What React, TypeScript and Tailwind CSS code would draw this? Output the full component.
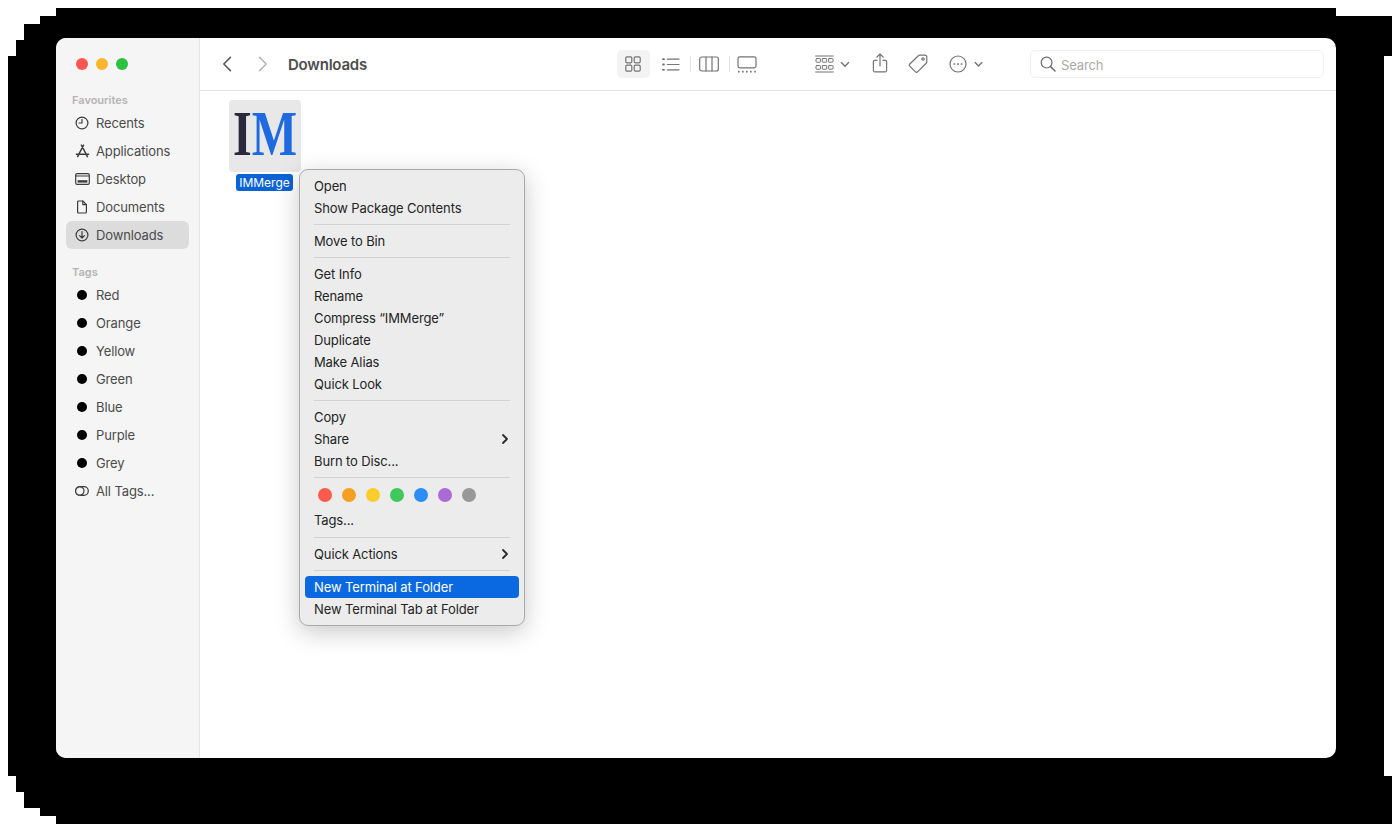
import React from "react";

const font = { fontFamily: "Inter, 'Liberation Sans', sans-serif" };

function Svg({ w, h, children, className = "" }: { w: number; h: number; children: React.ReactNode; className?: string }) {
  return (
    <svg width={w} height={h} viewBox={`0 0 ${w} ${h}`} fill="none" stroke="currentColor" strokeWidth={1.2} strokeLinecap="round" strokeLinejoin="round" className={"block flex-none " + className}>
      {children}
    </svg>
  );
}

const sideIcons: Record<string, React.ReactNode> = {
  Recents: (
    <Svg w={14} h={14}>
      <circle cx={7} cy={7} r={5.9} />
      <path d="M7 3.4V7H4" />
    </Svg>
  ),
  Applications: (
    <Svg w={15} h={14}>
      <path d="M8.6 1.2 3.4 11M6.4 1.2 11.6 11M1.4 10.2h12.2M2.6 12.6l1-1.8M12.4 12.6l-1-1.8" strokeWidth={1.5} />
    </Svg>
  ),
  Desktop: (
    <Svg w={15} h={12}>
      <rect x={0.7} y={0.7} width={13.6} height={10.6} rx={1.4} />
      <path d="M.8 3h13.4" />
      <rect x={2.6} y={7.2} width={9.8} height={2.4} fill="currentColor" stroke="none" />
    </Svg>
  ),
  Documents: (
    <Svg w={12} h={14}>
      <path d="M1.6 2a1 1 0 0 1 1-1h4.2L10.4 4.6V12a1 1 0 0 1-1 1H2.6a1 1 0 0 1-1-1Z" />
      <path d="M6.8 1v3.6h3.6" />
    </Svg>
  ),
  Downloads: (
    <Svg w={14} h={14}>
      <circle cx={7} cy={7} r={5.9} />
      <path d="M7 3.6v6.2M4.6 7.6 7 10l2.4-2.4" />
    </Svg>
  ),
};

function SideRow({ label, active = false, icon }: { label: string; active?: boolean; icon: React.ReactNode }) {
  return (
    <div className={"flex h-[28px] items-center rounded-[6px] mx-[10px] pl-[6px] " + (active ? "bg-[#dcdcdc]" : "")}>
      <span className="flex w-[20px] justify-center text-[#3c3c3c]">{icon}</span>
      <span className="ml-[4px] text-[13px] leading-none tracking-[-0.13px] text-[#4b4b4b]">{label}</span>
    </div>
  );
}

function SideHead({ label, className = "" }: { label: string; className?: string }) {
  return <div className={"flex h-[18px] items-center pl-[16px] text-[11px] font-semibold text-[#b4b4b4] " + className}>{label}</div>;
}

function Dot() {
  return <span className="block h-[10px] w-[10px] rounded-full bg-black" />;
}

function Item({ label, arrow = false, active = false }: { label: string; arrow?: boolean; active?: boolean }) {
  return (
    <div className={"mx-[5px] flex h-[22px] items-center justify-between rounded-[4px] pl-[9px] pr-[10px] text-[13px] leading-none tracking-[-0.12px] " + (active ? "bg-[#0a69e0] text-white" : "text-[#242424]")}>
      <span>{label}</span>
      {arrow && (
        <svg width={8} height={12} viewBox="0 0 8 12" fill="none" stroke="#2a2a2a" strokeWidth={1.8} strokeLinecap="round" strokeLinejoin="round">
          <path d="M2 2l4 4-4 4" />
        </svg>
      )}
    </div>
  );
}

function Sep({ h = "h-[11px]" }: { h?: string }) {
  return (
    <div className={"mx-[14px] flex items-center " + h}>
      <div className="h-px w-full bg-[#d2d2d2]" />
    </div>
  );
}

const tagColors = ["bg-[#fb5a4e]", "bg-[#f5a024]", "bg-[#f9cd2c]", "bg-[#3ec95c]", "bg-[#2b8df5]", "bg-[#ab6ad4]", "bg-[#989898]"];

export default function App() {
  return (
    <div className="h-[832px] w-[1392px] overflow-hidden bg-white" style={font}>
      <div className="h-[824px] w-[1392px] bg-black pl-[56px] pt-[38px] [clip-path:polygon(56px_8px,1336px_8px,1336px_16px,1392px_16px,1392px_56px,1384px_56px,1384px_776px,1392px_776px,1392px_824px,56px_824px,56px_816px,40px_816px,40px_808px,24px_808px,24px_792px,16px_792px,16px_776px,8px_776px,8px_56px,16px_56px,16px_40px,24px_40px,24px_24px,40px_24px,40px_16px,56px_16px)]">
        <div className="flex h-[720px] w-[1280px] overflow-hidden rounded-[10px] bg-white">
          <aside className="w-[144px] flex-none border-r border-[#e4e4e4] bg-[#f5f5f5]">
            <div className="flex h-[52px] items-center gap-[8px] pl-[20px]">
              <span className="h-[12px] w-[12px] rounded-full bg-[#fc5753]" />
              <span className="h-[12px] w-[12px] rounded-full bg-[#fdb52c]" />
              <span className="h-[12px] w-[12px] rounded-full bg-[#2cc23f]" />
            </div>
            <div className="h-px" />
            <SideHead label="Favourites" />
            {["Recents", "Applications", "Desktop", "Documents", "Downloads"].map((l) => (
              <SideRow key={l} label={l} active={l === "Downloads"} icon={sideIcons[l]} />
            ))}
            <SideHead label="Tags" className="mt-[14px]" />
            {["Red", "Orange", "Yellow", "Green", "Blue", "Purple", "Grey"].map((l) => (
              <SideRow key={l} label={l} icon={<Dot />} />
            ))}
            <SideRow
              label="All Tags..."
              icon={
                <Svg w={14} h={10}>
                  <rect x={0.7} y={0.7} width={12.6} height={8.6} rx={4.3} />
                  <circle cx={4.8} cy={5} r={4.2} fill="#f5f5f5" />
                </Svg>
              }
            />
          </aside>

          <main className="flex min-w-0 flex-1 flex-col">
            <header className="flex h-[53px] flex-none items-center border-b border-[#e3e3e3] text-[#737373]">
              <span className="ml-[22px] text-[#5a5a5a]">
                <Svg w={10} h={16}>
                  <path d="M8.4 1.4 1.8 8l6.6 6.6" strokeWidth={1.6} />
                </Svg>
              </span>
              <span className="ml-[26px] text-[#b8b8b8]">
                <Svg w={10} h={16}>
                  <path d="M1.6 1.4 8.2 8l-6.6 6.6" strokeWidth={1.6} />
                </Svg>
              </span>
              <span className="ml-[20px] text-[15px] font-semibold leading-none tracking-[-0.22px] text-[#4c4c4c]">Downloads</span>

              <span className="ml-[250px] flex h-[28px] w-[33px] items-center justify-center rounded-[5px] bg-[#f3f3f3]">
                <Svg w={16} h={16}>
                  <rect x={0.8} y={0.8} width={6} height={6} rx={1.2} />
                  <rect x={9.2} y={0.8} width={6} height={6} rx={1.2} />
                  <rect x={0.8} y={9.2} width={6} height={6} rx={1.2} />
                  <rect x={9.2} y={9.2} width={6} height={6} rx={1.2} />
                </Svg>
              </span>
              <span className="ml-[12px]">
                <Svg w={18} h={13}>
                  <path d="M5.4 1.2h11.6M5.4 6.5h11.6M5.4 11.8h11.6" />
                  <path d="M1 1.2h1M1 6.5h1M1 11.8h1" strokeWidth={1.8} />
                </Svg>
              </span>
              <span className="ml-[10px] h-[16px] w-px bg-[#e4e4e4]" />
              <span className="ml-[8px]">
                <Svg w={20} h={16}>
                  <rect x={0.7} y={1} width={18.6} height={14} rx={2} />
                  <path d="M7 1v14M13 1v14" />
                </Svg>
              </span>
              <span className="ml-[10px] h-[16px] w-px bg-[#e4e4e4]" />
              <span className="ml-[7px]">
                <Svg w={20} h={17}>
                  <rect x={1} y={0.8} width={18} height={11} rx={1.8} />
                  <path d="M1 15.6h1.6M5 15.6h1.6M9 15.6h1.6M13 15.6h1.6M17.2 15.6h1.6" strokeWidth={1.6} strokeLinecap="butt" />
                </Svg>
              </span>

              <span className="ml-[58px]">
                <Svg w={19} h={18}>
                  <path d="M.6 1h17.8M.6 17h17.8" strokeWidth={1} />
                  <rect x={1} y={3.6} width={4.4} height={3.6} rx={0.5} strokeWidth={1} />
                  <rect x={7.3} y={3.6} width={4.4} height={3.6} rx={0.5} strokeWidth={1} />
                  <rect x={13.6} y={3.6} width={4.4} height={3.6} rx={0.5} strokeWidth={1} />
                  <rect x={1} y={10.6} width={4.4} height={3.6} rx={0.5} strokeWidth={1} />
                  <rect x={7.3} y={10.6} width={4.4} height={3.6} rx={0.5} strokeWidth={1} />
                  <rect x={13.6} y={10.6} width={4.4} height={3.6} rx={0.5} strokeWidth={1} />
                </Svg>
              </span>
              <span className="ml-[6px]">
                <Svg w={10} h={7}>
                  <path d="M1.4 1.6 5 5.2l3.6-3.6" strokeWidth={1.4} />
                </Svg>
              </span>
              <span className="ml-[22px] -translate-y-[1px]">
                <Svg w={16} h={20}>
                  <path d="M5 7.4H2.6a1.2 1.2 0 0 0-1.2 1.2v9a1.2 1.2 0 0 0 1.2 1.2h10.8a1.2 1.2 0 0 0 1.2-1.2v-9a1.2 1.2 0 0 0-1.2-1.2H11" />
                  <path d="M8 13V1.2M4.8 4.2 8 1l3.2 3.2" />
                </Svg>
              </span>
              <span className="ml-[20px]">
                <Svg w={20} h={20}>
                  <path d="M12.2 1.2h4.6a2 2 0 0 1 2 2v4.6a2 2 0 0 1-.6 1.4l-8.6 8.6a1.6 1.6 0 0 1-2.2 0l-5.6-5.6a1.6 1.6 0 0 1 0-2.2l8.6-8.2a2 2 0 0 1 1.8-.6Z" />
                  <circle cx={15} cy={5} r={1.2} />
                </Svg>
              </span>
              <span className="ml-[21px]">
                <Svg w={18} h={18}>
                  <circle cx={9} cy={9} r={8} />
                  <path d="M5.2 9h.4M8.8 9h.4M12.4 9h.4" strokeWidth={1.7} />
                </Svg>
              </span>
              <span className="ml-[7px]">
                <Svg w={9} h={7}>
                  <path d="M1.2 1.6 4.5 5l3.3-3.4" strokeWidth={1.4} />
                </Svg>
              </span>

              <div className="ml-[47px] flex h-[28px] w-[294px] items-center rounded-[5px] border border-[#efefef] pl-[9px] text-[#6e6e6e]">
                <Svg w={16} h={16}>
                  <circle cx={6.6} cy={6.6} r={5.4} />
                  <path d="m10.6 10.6 4.4 4.4" strokeWidth={1.5} />
                </Svg>
                <span className="ml-[5px] mt-[2px] text-[13px] leading-none tracking-[-0.13px] text-[#a9a9a9]">Search</span>
              </div>
            </header>

            <section className="relative flex-1">
              <div className="ml-[29px] mt-[9px] flex w-[72px] flex-col items-center">
                <div className="flex h-[72px] w-[72px] items-center justify-center rounded-[4px] bg-[#e8e8e8]">
                  <div className="flex w-[64px] scale-x-[0.75] items-baseline justify-center whitespace-nowrap font-bold leading-none text-[64px] -translate-y-[2px]" style={{ fontFamily: "'Liberation Serif', serif" }}>
                    <span className="text-[#2a2a3c]">I</span>
                    <span className="text-[#1f6ae0]">M</span>
                  </div>
                </div>
                <div className="mr-[1px] mt-[2px] flex h-[17px] w-[57px] items-center justify-center whitespace-nowrap rounded-[3px] bg-[#0a63d4] text-[12px] leading-none text-white">IMMerge</div>
              </div>

              <div className="absolute left-[99px] top-[78px] h-[457px] w-[226px] rounded-[9px] border border-[#a9a9a9] bg-[#ececec] pt-[5px] shadow-[0_6px_24px_rgba(0,0,0,0.22)]">
                <Item label="Open" />
                <Item label="Show Package Contents" />
                <Sep />
                <Item label="Move to Bin" />
                <Sep />
                <Item label="Get Info" />
                <Item label="Rename" />
                <Item label="Compress “IMMerge”" />
                <Item label="Duplicate" />
                <Item label="Make Alias" />
                <Item label="Quick Look" />
                <Sep />
                <Item label="Copy" />
                <Item label="Share" arrow />
                <Item label="Burn to Disc..." />
                <Sep />
                <div className="flex h-[26px] items-start gap-[10px] pl-[18px] pt-[5px]">
                  {tagColors.map((c) => (
                    <span key={c} className={"h-[14px] w-[14px] rounded-full " + c} />
                  ))}
                </div>
                <Item label="Tags..." />
                <Sep h="h-[12px]" />
                <Item label="Quick Actions" arrow />
                <Sep />
                <Item label="New Terminal at Folder" active />
                <Item label="New Terminal Tab at Folder" />
              </div>
            </section>
          </main>
        </div>
      </div>
    </div>
  );
}
